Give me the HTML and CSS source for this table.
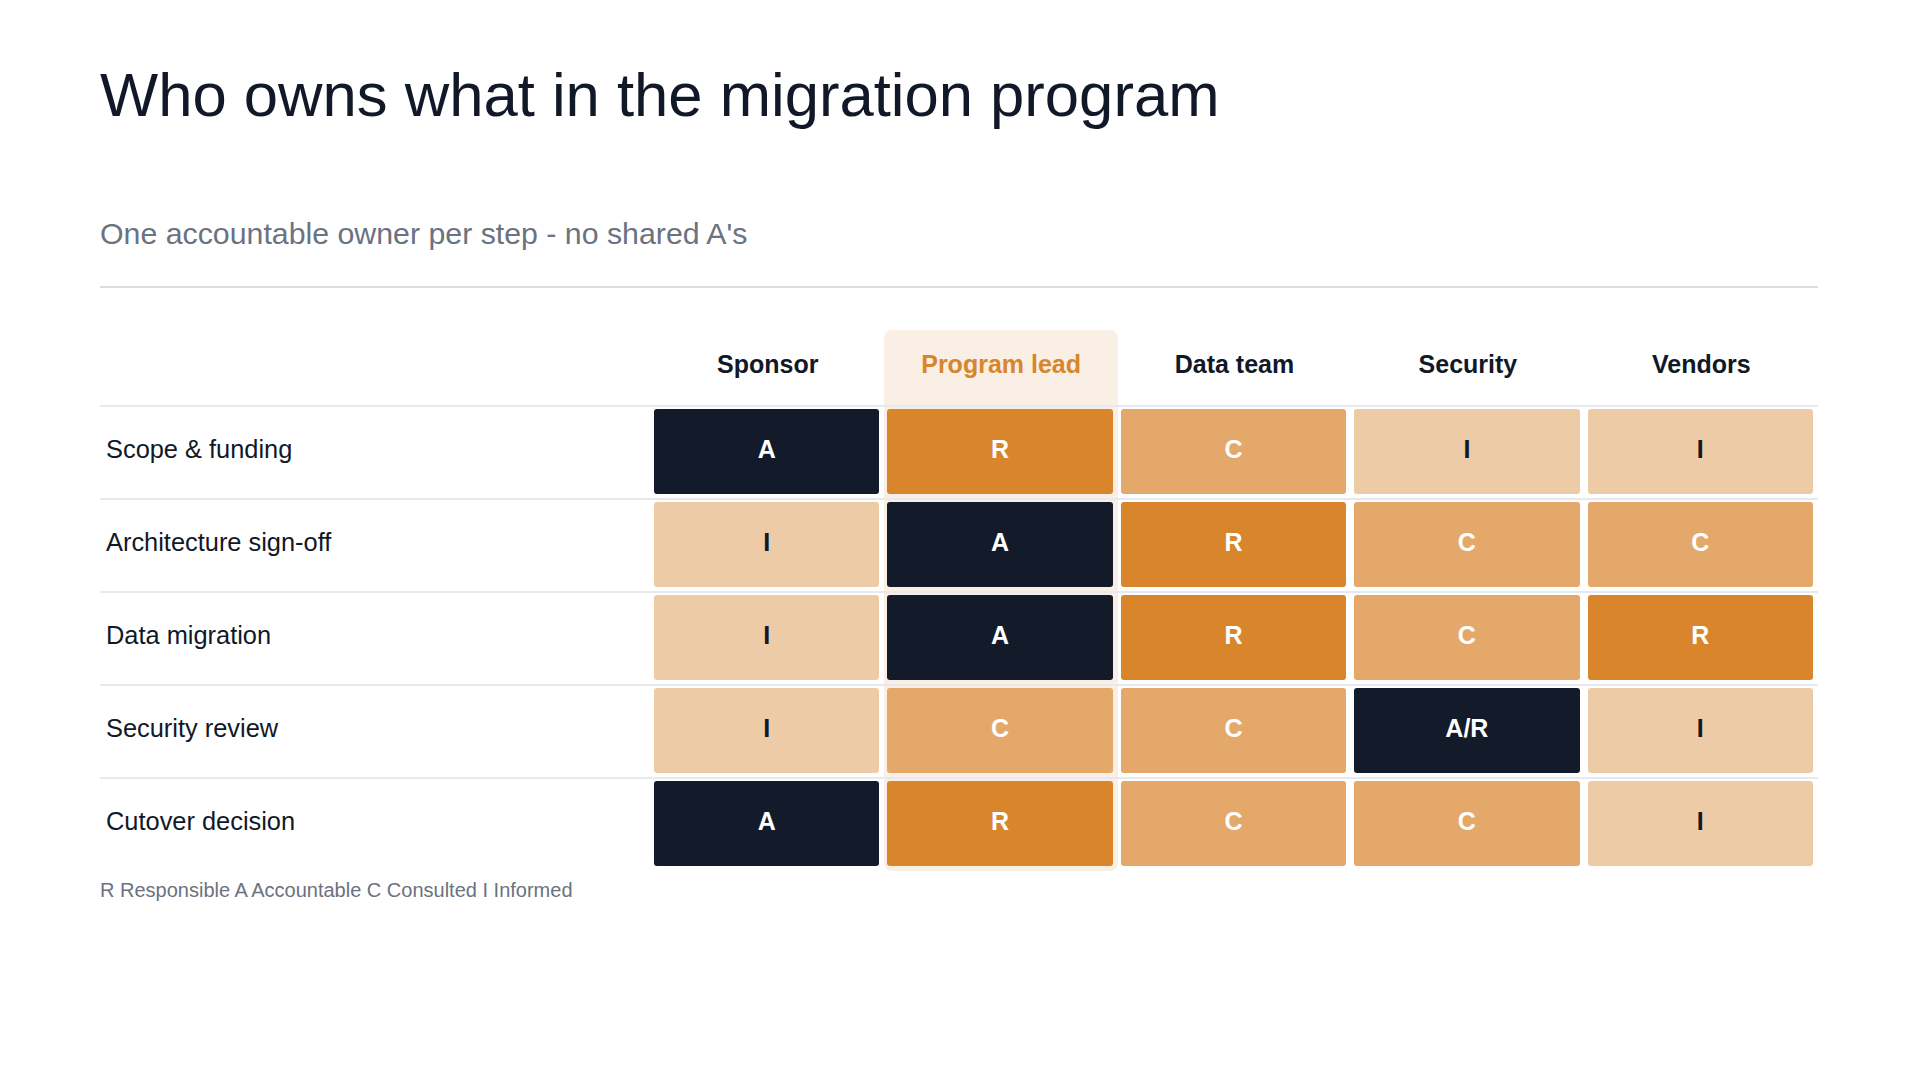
FILE: index.html
```html
<!DOCTYPE html>
<html lang="en">
<head>
    <meta charset="UTF-8">
    <meta name="viewport" content="width=device-width, initial-scale=1.0">
    <title>RACI - Migration Program</title>
    <link rel="stylesheet" href="styles.css">
</head>
<body>

    <div class="slide">
        <!-- Heading -->
        <h1>Who owns what in the migration program</h1>
        <p class="subtitle">One accountable owner per step - no shared A's</p>
        <hr class="rule">

        <!-- RACI Matrix -->
        <div class="matrix">
            <div class="row head">
                <div class="label"></div>
                <div class="role">Sponsor</div>
                <div class="role lead">Program lead</div>
                <div class="role">Data team</div>
                <div class="role">Security</div>
                <div class="role">Vendors</div>
            </div>

            <div class="row">
                <div class="label">Scope &amp; funding</div>
                <div class="slot"><span class="chip acc">A</span></div>
                <div class="slot lead"><span class="chip resp">R</span></div>
                <div class="slot"><span class="chip cons">C</span></div>
                <div class="slot"><span class="chip info">I</span></div>
                <div class="slot"><span class="chip info">I</span></div>
            </div>

            <div class="row">
                <div class="label">Architecture sign-off</div>
                <div class="slot"><span class="chip info">I</span></div>
                <div class="slot lead"><span class="chip acc">A</span></div>
                <div class="slot"><span class="chip resp">R</span></div>
                <div class="slot"><span class="chip cons">C</span></div>
                <div class="slot"><span class="chip cons">C</span></div>
            </div>

            <div class="row">
                <div class="label">Data migration</div>
                <div class="slot"><span class="chip info">I</span></div>
                <div class="slot lead"><span class="chip acc">A</span></div>
                <div class="slot"><span class="chip resp">R</span></div>
                <div class="slot"><span class="chip cons">C</span></div>
                <div class="slot"><span class="chip resp">R</span></div>
            </div>

            <div class="row">
                <div class="label">Security review</div>
                <div class="slot"><span class="chip info">I</span></div>
                <div class="slot lead"><span class="chip cons">C</span></div>
                <div class="slot"><span class="chip cons">C</span></div>
                <div class="slot"><span class="chip acc">A/R</span></div>
                <div class="slot"><span class="chip info">I</span></div>
            </div>

            <div class="row last">
                <div class="label">Cutover decision</div>
                <div class="slot"><span class="chip acc">A</span></div>
                <div class="slot lead"><span class="chip resp">R</span></div>
                <div class="slot"><span class="chip cons">C</span></div>
                <div class="slot"><span class="chip cons">C</span></div>
                <div class="slot"><span class="chip info">I</span></div>
            </div>
        </div>

        <p class="legend">R Responsible A Accountable C Consulted I Informed</p>
    </div>

</body>
</html>
```

FILE: styles.css
```css
body {
    font-family: "Liberation Sans", Arial, sans-serif;
    margin: 0;
    padding: 0;
    background-color: white;
    color: #111827;
}

.slide {
    padding: 58px 101px 0 100px;
}

/* Heading */
h1 {
    font-size: 61.6px;
    font-weight: normal;
    line-height: 1.2;
    margin: 0;
    color: #111827;
}

.subtitle {
    font-size: 30.3px;
    line-height: 1.2;
    color: #6b7280;
    margin: 84px 0 0 0;
}

.rule {
    margin: 34px 0 0 0;
    border: 0;
    border-top: 2px solid #d9dce1;
}

/* Matrix */
.matrix {
    margin-top: 42px;
}

.row {
    display: grid;
    grid-template-columns: 551px repeat(5, 1fr);
    border-top: 2px solid #e8e9ee;
}

.row.head {
    border-top: none;
    height: 75px;
}

.role {
    display: flex;
    align-items: center;
    justify-content: center;
    padding-bottom: 6px;
    font-size: 25px;
    font-weight: bold;
    color: #111827;
}

.role.lead {
    background-color: #f9efe4;
    color: #d9852b;
    border-radius: 8px 8px 0 0;
}

.label {
    display: flex;
    align-items: center;
    padding-left: 6px;
    padding-bottom: 7px;
    font-size: 25.4px;
}

.slot {
    padding: 2px 5px 4px 3px;
}

.slot.lead {
    background-color: #f9efe4;
}

.row.last .slot.lead {
    padding-bottom: 5px;
    border-radius: 0 0 8px 8px;
}

.chip {
    display: flex;
    align-items: center;
    justify-content: center;
    height: 85px;
    box-sizing: border-box;
    padding-bottom: 5px;
    border-radius: 3px;
    font-size: 25px;
    font-weight: bold;
}

.acc { background-color: #131a2a; color: white; }
.resp { background-color: #d9852b; color: white; }
.cons { background-color: #e3a86a; color: white; }
.info { background-color: #edcba6; color: #111827; }

.legend {
    font-size: 20px;
    color: #6b7280;
    margin: 8px 0 0 0;
}
```
